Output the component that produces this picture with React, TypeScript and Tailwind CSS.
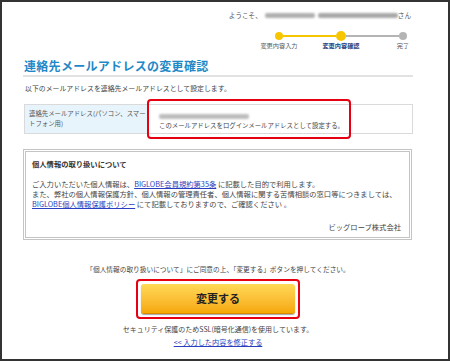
import { ReactNode } from "react";

const jp = "font-['Noto_Sans_CJK_JP','Noto_Sans',sans-serif]";

function Blur({ w, tone = "bg-[#9a9a9a]" }: { w: number; tone?: string }) {
  // masked personal data shown as a soft grey smear
  return (
    <span
      className={`inline-block h-[5px] align-middle rounded-[2px] blur-[1px] ${tone}`}
      style={{ width: w }}
    />
  );
}

function Link({ children }: { children: ReactNode }) {
  return <span className="text-[#2a3fc0] underline underline-offset-1">{children}</span>;
}

function Progress() {
  return (
    <div className="ml-[225px] w-[186px]">
      <div className="ml-[27px] flex w-[132px] items-center">
        <span className="h-[8px] w-[8px] rounded-full bg-[#f7c600]" />
        <span className="h-[2px] flex-1 bg-[#f7c600]" />
        <span className="h-[10px] w-[10px] rounded-full bg-[#f7c600]" />
        <span className="h-[2px] flex-1 bg-[#b4b4b4]" />
        <span className="h-[8px] w-[8px] rounded-full bg-[#b4b4b4]" />
      </div>
      <div className="mt-[1px] grid grid-cols-3 text-center text-[6.2px] leading-[8px] text-[#555]">
        <span>変更内容入力</span>
        <span className="font-bold text-[#1d3d7a]">変更内容確認</span>
        <span>完了</span>
      </div>
    </div>
  );
}

export default function App() {
  return (
    <div className={`h-[361px] w-[450px] overflow-hidden border-2 border-[#333] bg-white text-[#444] ${jp}`}>
      <div className="ml-[21px] w-[390px]">
        {/* Welcome */}
        <div className="flex h-[10px] mt-[8px] items-center justify-end gap-[3px] pr-[2px] text-[6.6px] leading-[10px] text-[#555]">
          <span>ようこそ、</span>
          <Blur w={50} tone="bg-[#b0b0b0]" />
          <Blur w={80} tone="bg-[#a8a8a8]" />
          <span className="-ml-[3px]">さん</span>
        </div>

        <div className="mt-[11px]">
          <Progress />
        </div>

        {/* Title */}
        <h1 className="mt-[8px] border-b-2 border-[#e2e2e2] pb-[2px] pl-[1px] text-[12px] font-bold leading-[15px] tracking-[0.3px] text-[#1f88c6]">
          連絡先メールアドレスの変更確認
        </h1>

        <p className="mt-[6px] pl-[2px] text-[6.9px] leading-[10px]">
          以下のメールアドレスを連絡先メールアドレスとして設定します。
        </p>

        {/* Address table */}
        <div className="relative mt-[11px] ml-[1px] flex w-[389px] border border-[#dadada] text-[6.4px] leading-[10px]">
          <div className="w-[124px] whitespace-nowrap border-r border-[#dadada] bg-[#e8f4fc] py-[4px] pl-[4px] text-[#555]">
            連絡先メールアドレス(パソコン、スマー
            <br />
            トフォン用)
          </div>
          <div className="flex-1 whitespace-nowrap pt-[6px] pb-[2px] pl-[10px]">
            <div className="flex h-[10px] items-center">
              <Blur w={90} tone="bg-[#bdbdbd]" />
            </div>
            <div>このメールアドレスをログインメールアドレスとして設定する。</div>
          </div>
          <div className="pointer-events-none absolute top-[-6px] left-[122px] h-[40px] w-[204px] rounded-[4px] border-2 border-[#e60012]" />
        </div>

        {/* Privacy */}
        <div className="mt-[15px] w-[389px] border-[3px] border-double border-[#c4c4c4] px-[6px] pt-[7px] pb-[5px] text-[7.3px] leading-[10px]">
          <div className="font-bold text-[#333]">個人情報の取り扱いについて</div>
          <div className="mt-[10px] whitespace-nowrap">
            ご入力いただいた個人情報は、<Link>BIGLOBE会員規約第35条</Link> に記載した目的で利用します。
            <br />
            また、弊社の個人情報保護方針、個人情報の管理責任者、個人情報に関する苦情相談の窓口等につきましては、
            <br />
            <Link>BIGLOBE個人情報保護ポリシー</Link> にて記載しておりますので、ご確認ください 。
          </div>
          <div className="mt-[13px] pr-[2px] text-right">ビッグローブ株式会社</div>
        </div>

        {/* Submit */}
        <div className="flex flex-col items-center">
          <p className="mt-[24px] text-[6.7px] leading-[10px]">
            「個人情報の取り扱いについて」にご同意の上、「変更する」ボタンを押してください。
          </p>
          <div className="mt-[5px] rounded-[4px] border-2 border-[#e60012] bg-white p-[3px]">
            <button className="flex h-[30px] w-[154px] items-center justify-center rounded-[3px] border-b border-[#d98a00] bg-gradient-to-b from-[#ffd955] to-[#f6a800] text-[11px] font-bold text-[#222] shadow-[0_1px_1px_rgba(0,0,0,0.35)]">
              変更する
            </button>
          </div>
          <p className="mt-[5px] text-[7px] leading-[10px]">
            セキュリティ保護のためSSL(暗号化通信)を使用しています。
          </p>
          <p className="mt-[3px] text-[7.2px] leading-[10px]">
            <Link>&lt;&lt; 入力した内容を修正する</Link>
          </p>
        </div>
      </div>
    </div>
  );
}
